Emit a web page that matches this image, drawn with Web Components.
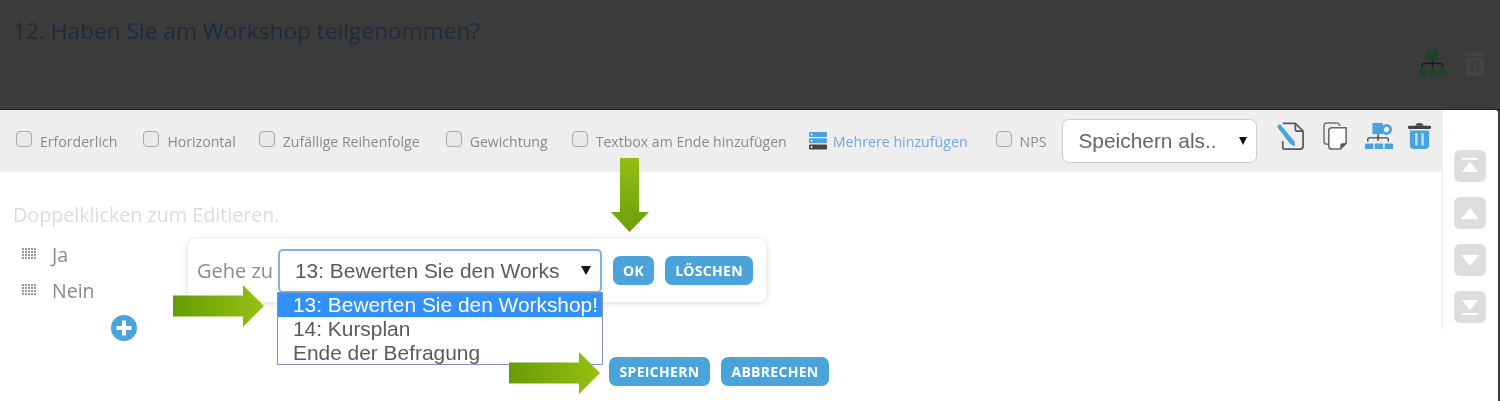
<!DOCTYPE html>
<html lang="de">
<head>
<meta charset="utf-8">
<title>Umfrage Editor</title>
<style>
  html, body { margin: 0; height: 401px; overflow: hidden; background: #3b3b3b; }
  body { font-family: "Open Sans", sans-serif; }
  svg { display: block; }
</style>
</head>
<body>
<survey-editor></survey-editor>

<script>
// Shared icon markup, keeps the components below readable
const ICONS = {
    tree: (a, b) => `<svg width="29" height="28" viewBox="0 0 34 30" preserveAspectRatio="none">
        <rect x="10" y="1" width="14" height="11" fill="${a}"/>
        <path d="M5 20v-2.500q0-2 2-2h20q2 0 2 2V20M17 12v8" fill="none" stroke="${b}" stroke-width="1.600"/>
        <rect x="1" y="22" width="9" height="7" rx="1" fill="${a}"/><rect x="12.500" y="22" width="9" height="7" rx="1" fill="${a}"/><rect x="24" y="22" width="9" height="7" rx="1" fill="${a}"/>
    </svg>`,
    treeGear: `<svg width="30" height="28" viewBox="0 0 32 30" preserveAspectRatio="none">
        <rect x="9" y="1" width="11" height="12" fill="#4aa3dc"/>
        <circle cx="24" cy="8" r="4.400" fill="none" stroke="#4aa3dc" stroke-width="3"/>
        <path d="M4 21v-2q0-2 2-2h18q2 0 2 2v2M15 13v7" fill="none" stroke="#444" stroke-width="1.500"/>
        <rect x="1" y="23" width="9" height="6" rx="1" fill="#4aa3dc"/><rect x="11.500" y="23" width="9" height="6" rx="1" fill="#4aa3dc"/><rect x="22" y="23" width="9" height="6" rx="1" fill="#4aa3dc"/>
    </svg>`,
    trash: (lid, body, slot, w, h) => `<svg width="${w}" height="${h}" viewBox="0 0 26 30" preserveAspectRatio="none">
        <path d="M9 4q0-3 4-3t4 3" fill="${lid}"/><rect x="1" y="4" width="24" height="3.500" rx="1.500" fill="${lid}"/>
        <path d="M3 9h20v16q0 4-4 4H7q-4 0-4-4z" fill="${body}"/>
        <rect x="8.500" y="12" width="2.600" height="13" fill="${slot}"/><rect x="14.900" y="12" width="2.600" height="13" fill="${slot}"/>
    </svg>`,
    editDoc: `<svg width="29" height="29" viewBox="0 0 30 30">
        <path d="M7 1.500h13l8 8V25q0 3-3 3H9q-2 0-2-2v-6M20 1.500v6q0 2 2 2h6" fill="none" stroke="#5a5a5a" stroke-width="1.800"/>
        <path d="M1 5l3-3 15 18 1 5-5-2z" fill="#4aa3dc"/>
    </svg>`,
    copyDoc: `<svg width="26" height="29" viewBox="0 0 27 30" preserveAspectRatio="none">
        <path d="M6 23H4q-3 0-3-3V4q0-3 3-3h10q3 0 3.500 3" fill="none" stroke="#777" stroke-width="1.600"/>
        <path d="M6 9q0-3 3-3h15v16l-6 6H9q-3 0-3-3z" fill="#fff" stroke="#666" stroke-width="1.600"/>
        <path d="M18 28v-4q0-2 2-2h5z" fill="#555"/>
    </svg>`,
    stack: `<svg width="18" height="18" viewBox="0 0 18 18">
        <rect y="0" width="18" height="5" rx="1" fill="#4aa3dc"/><rect y="6.300" width="18" height="5" rx="1" fill="#4aa3dc"/><rect y="12.600" width="18" height="5" rx="1" fill="#444"/>
        <circle cx="2.500" cy="2.500" r="1" fill="#fff"/><circle cx="2.500" cy="8.800" r="1" fill="#fff"/><circle cx="2.500" cy="15.100" r="1" fill="#fff"/>
    </svg>`,
    // 5 x 4 dot grid of the drag handle
    grip: `<svg width="16" height="12" viewBox="0 0 16 12"><defs><pattern id="d" width="3" height="3" patternUnits="userSpaceOnUse"><rect width="2" height="2" fill="#999"/></pattern></defs><rect width="14" height="11" fill="url(#d)"/></svg>`
};

// Small helper so every component only declares its css and markup
function component(name, css, html) {
    customElements.define(name, class extends HTMLElement {
        constructor() {
            super();
            this.attachShadow({ mode: 'open' });
            const markup = typeof html === 'function' ? html(this) : html;
            this.shadowRoot.innerHTML = `<style>${css}</style>${markup}`;
        }
    });
}

component('opt-check', `
    :host { display: inline-flex; align-items: center; gap: 8px; font-size: 14.100px; color: #8b8b8b; white-space: nowrap; }
    i { width: 14px; height: 14px; margin-top: -4px; border: 1.500px solid #a9a9a9; border-radius: 4px; background: #e9e9e9; }
`, `<i></i><slot></slot>`);

component('ui-button', `
    :host { display: inline-flex; align-items: center; justify-content: center; height: 29px; padding: 0 10px; box-sizing: border-box;
        background: #4aa3d9; color: #fff; border-radius: 7px; font: 700 14px "Open Sans", sans-serif; letter-spacing: .3px; white-space: nowrap; }
`, `<slot></slot>`);

component('rail-button', `
    :host { display: flex; align-items: center; justify-content: center; width: 32px; height: 32px; background: #dedede; border-radius: 6px; }
`, el => {
    const d = {
        top: '<path d="M2 1h16v1.800H2zM10 5l8 10H2z" fill="#fff"/>',
        up: '<path d="M10 4l9 11H1z" fill="#fff"/>',
        down: '<path d="M1 4h18l-9 11z" fill="#fff"/>',
        bottom: '<path d="M2 2h16l-8 10zM2 15h16v1.800H2z" fill="#fff"/>'
    }[el.getAttribute('dir')];
    return `<svg width="20" height="18" viewBox="0 0 20 18">${d}</svg>`;
});

component('answer-row', `
    :host { display: flex; align-items: center; gap: 14px; height: 36px; font-size: 19.500px; color: #8a8a8a; padding-left: 22px; }
`, `${ICONS.grip}<slot></slot>`);

component('flow-arrow', `
    :host { position: absolute; display: block; }
`, el => {
    const w = +el.getAttribute('w'), h = +el.getAttribute('h'), down = el.hasAttribute('down');
    if (down) {
        return `<svg width="${w}" height="${h}" viewBox="0 0 ${w} ${h}">
            <defs><linearGradient id="g" x1="0" x2="0" y1="0" y2="1"><stop offset="0" stop-color="#93bf10"/><stop offset="1" stop-color="#6a9f08"/></linearGradient></defs>
            <path d="M9 0h19v54h10L18.500 74 0 54h9z" fill="url(#g)"/></svg>`;
    }
    const head = +el.getAttribute('head');
    return `<svg width="${w}" height="${h}" viewBox="0 0 ${w} ${h}">
        <defs><linearGradient id="g"><stop offset="0" stop-color="#669c07"/><stop offset="1" stop-color="#97c112"/></linearGradient></defs>
        <path d="M0 10.500H${w - head}V0L${w} 21 ${w - head} 42V31.500H0z" fill="url(#g)"/></svg>`;
});

component('goto-popover', `
    :host { position: absolute; left: 188px; top: 129px; width: 578px; height: 63px; box-sizing: border-box; padding-left: 9px;
        display: flex; align-items: center; background: #fff; border-radius: 7px; box-shadow: 0 1px 7px rgba(0,0,0,.16); }
    .label { font-size: 20px; color: #8c8c8c; width: 81px; white-space: nowrap; }
    .select { position: relative; width: 324px; height: 44px; box-sizing: border-box; border: 2px solid #82aee6; border-radius: 5px; background: #fff;
        display: flex; align-items: center; justify-content: space-between; padding: 0 9px 0 15px; white-space: nowrap;
        font: 20.900px "Liberation Sans", sans-serif; color: #5a5a5a; }
    .caret { width: 0; height: 0; border: 5.500px solid transparent; border-top: 9px solid #111; border-bottom: 0; }
    .list { position: absolute; left: -3px; top: 41px; width: 326px; height: 73px; box-sizing: border-box; border: 1px solid #7f94b8; background: #fff;
        font: 20.900px/24px "Liberation Sans", sans-serif; color: #5a5a5a; white-space: nowrap; }
    .list div { padding-left: 15px; height: 24px; line-height: 23px; }
    .list .on { background: #3391ff; color: #fff; }
    .actions { display: flex; gap: 11px; margin-left: 11px; }
    .ok { width: 41px; padding: 0; } .del { width: 88px; padding: 0; }
`, `
    <span class="label">Gehe zu</span>
    <div class="select">13: Bewerten Sie den Works<span class="caret"></span>
        <div class="list">
            <div class="on">13: Bewerten Sie den Workshop!</div>
            <div>14: Kursplan</div>
            <div>Ende der Befragung</div>
        </div>
    </div>
    <div class="actions"><ui-button class="ok">OK</ui-button><ui-button class="del">LÖSCHEN</ui-button></div>
`);

component('question-head', `
    :host { display: block; height: 110px; box-sizing: border-box; position: relative; padding: 16px 13px 0; background: #3b3b3b;
        border-bottom: 1px solid #222; }
    h2 { margin: 0; font: 400 22.700px/30px "Open Sans", sans-serif; color: #1e2b38; }
    .icons { position: absolute; right: 13px; top: 49px; display: flex; gap: 16px; align-items: flex-start; }
`, `
    <h2>12. Haben Sie am Workshop teilgenommen?</h2>
    <div class="icons">${ICONS.tree('#1c4527', '#1a1a1a')}${ICONS.trash('#444', '#444', '#3d3d3d', 24, 28)}</div>
`);

component('tool-bar', `
    :host { display: flex; align-items: center; height: 62px; box-sizing: border-box; padding-left: 16px; background: #eee; white-space: nowrap; }
    .link { display: inline-flex; align-items: center; gap: 6px; font-size: 14.200px; color: #7aa6dc; margin-left: 22px; }
    .save { width: 195px; height: 44px; margin: 0 0 0 16px; box-sizing: border-box; border: 1px solid #ccc; border-radius: 7px; background: #fff; flex: none;
        display: flex; align-items: center; justify-content: space-between; padding: 0 9px 0 15px;
        font: 20.900px "Liberation Sans", sans-serif; color: #666; }
    .caret { width: 0; height: 0; border: 4.500px solid transparent; border-top: 8px solid #111; border-bottom: 0; }
    .icons { display: flex; align-items: flex-start; height: 44px; margin-left: 19px; padding-top: 3px; box-sizing: border-box; }
    .gap { margin-left: 26px; } .gap2 { margin-left: 23px; } .gap3 { margin-left: 26px; } .gap4 { margin-left: 24px; } .nps { margin-left: 28px; }
    .i2 { margin-left: 18px; } .i3 { margin-left: 15px; } .i4 { margin-left: 13px; }
`, `
    <opt-check>Erforderlich</opt-check>
    <opt-check class="gap">Horizontal</opt-check>
    <opt-check class="gap2">Zufällige Reihenfolge</opt-check>
    <opt-check class="gap3">Gewichtung</opt-check>
    <opt-check class="gap4">Textbox am Ende hinzufügen</opt-check>
    <span class="link">${ICONS.stack}Mehrere hinzufügen</span>
    <opt-check class="nps">NPS</opt-check>
    <div class="save">Speichern als..<span class="caret"></span></div>
    <div class="icons">${ICONS.editDoc}<span class="i2">${ICONS.copyDoc}</span><span class="i3">${ICONS.treeGear}</span><span class="i4">${ICONS.trash('#444', '#4aa3dc', '#bfe0f4', 25, 28)}</span></div>
`);

component('side-rail', `
    :host { display: flex; flex-direction: column; gap: 15px; width: 56px; height: 220px; box-sizing: border-box; padding: 40px 0 0 11px;
        border-left: 1px solid #eee; }
`, `
    <rail-button dir="top"></rail-button>
    <rail-button dir="up"></rail-button>
    <rail-button dir="down"></rail-button>
    <rail-button dir="bottom"></rail-button>
`);

component('survey-editor', `
    :host { display: block; width: 1500px; height: 401px; position: relative; overflow: hidden; filter: blur(.35px); }
    .panel { position: relative; width: 1498px; height: 291px; background: #fff; border-top-right-radius: 3px; display: grid; grid-template-columns: 1442px 56px; }
    .content { display: flex; flex-direction: column; }
    .hint { font-size: 19.700px; line-height: 24px; color: #dcdcdc; padding: 31px 0 0 13px; }
    .answers { margin-top: 9px; }
    .plus { margin: 7px 0 0 111px; }
    .footer { display: flex; gap: 11px; padding-left: 609px; margin-top: 16px; }
    .b1 { width: 101px; padding: 0; } .b2 { width: 108px; padding: 0; }
`, `
    <question-head></question-head>
    <div class="panel">
        <div class="content">
            <tool-bar></tool-bar>
            <div class="hint">Doppelklicken zum Editieren.</div>
            <div class="answers"><answer-row>Ja</answer-row><answer-row>Nein</answer-row></div>
            <svg class="plus" width="26" height="26" viewBox="0 0 26 26"><circle cx="13" cy="13" r="13" fill="#4aa3d9"/><path d="M11 5.500h4V11h5.500v4H15v5.500h-4V15H5.500v-4H11z" fill="#fff"/></svg>
            <div class="footer"><ui-button class="b1">SPEICHERN</ui-button><ui-button class="b2">ABBRECHEN</ui-button></div>
        </div>
        <side-rail></side-rail>
        <goto-popover></goto-popover>
        <flow-arrow down w="38" h="74" style="left:611px;top:48px"></flow-arrow>
        <flow-arrow w="91" h="42" head="21" style="left:173px;top:175px"></flow-arrow>
        <flow-arrow w="91" h="42" head="21" style="left:509px;top:242px"></flow-arrow>
    </div>
`);
</script>
</body>
</html>
